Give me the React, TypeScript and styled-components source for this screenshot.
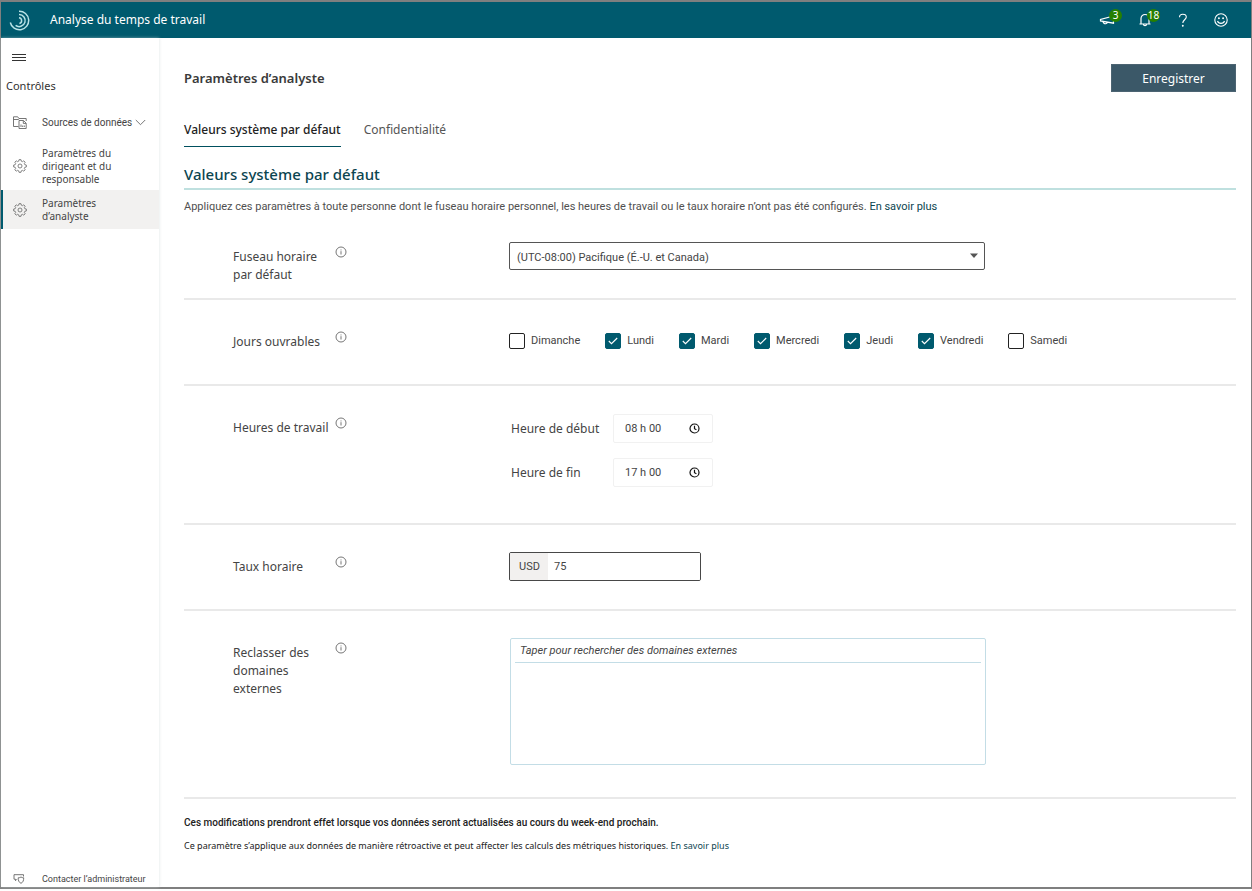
import React, { useState } from "react";
import styled, { createGlobalStyle, css } from "styled-components";

const display = `"Noto Sans", "Segoe UI", sans-serif`;
const body = `Roboto, "Segoe UI", sans-serif`;
const teal = "#005a6e";

const GlobalStyle = createGlobalStyle`
  *, *::before, *::after { box-sizing: border-box; }
  body { margin: 0; background: #fff; color: #444; font-family: ${body}; font-size: 11px; }
  button, input, select { font: inherit; color: inherit; }
  h1, h2, p, ul { margin: 0; padding: 0; }
  ul { list-style: none; }
`;

const Page = styled.div`
  min-height: 100vh;
  padding-bottom: 2px;
  display: flex;
`;

const Frame = styled.div`
  flex: 1;
  display: flex;
  flex-direction: column;
  border: solid #7f7f7f;
  border-width: 2px 1px;
`;

const Header = styled.header`
  height: 36px;
  display: flex;
  align-items: center;
  padding: 0 11px 0 8px;
  background: ${teal};
  color: #fff;
`;

const AppName = styled.span`
  flex: 1;
  margin-left: 20px;
  font: 400 12px/18px ${display};
`;

const HeaderButton = styled.button`
  position: relative;
  width: 38px;
  height: 34px;
  display: grid;
  place-items: center;
  padding: 0;
  border: 0;
  background: none;
`;

const Badge = styled.span`
  position: absolute;
  top: 6px;
  left: 21px;
  min-width: 13px;
  height: 13px;
  border-radius: 7px;
  background: #268000;
  font: 400 10px/13px ${display};
  text-align: center;
`;

const Columns = styled.div`
  flex: 1;
  display: flex;
`;

const Sidebar = styled.nav`
  position: relative;
  width: 158px;
  flex: none;
  display: flex;
  flex-direction: column;
  background: #fff;
  box-shadow: 0 0 3px rgba(200, 210, 210, 0.6);
`;

const MenuButton = styled.button`
  width: 36px;
  height: 38px;
  display: grid;
  place-items: center;
  padding: 0;
  border: 0;
  background: none;
`;

const SidebarTitle = styled.h2`
  padding-left: 5px;
  margin-bottom: 6px;
  font: 400 11px/20px ${display};
  color: #333;
`;

const NavList = styled.ul`
  flex: 1;
`;

const NavLink = styled.a<{ $size: "one" | "two" | "three" | "foot"; $active?: boolean }>`
  height: ${(p) => ({ one: 40, two: 39, three: 48, foot: 16 })[p.$size]}px;
  display: grid;
  grid-template-columns: 14px auto 1fr;
  align-items: center;
  padding-left: ${(p) => (p.$active ? 10 : 12)}px;
  color: #444;
  text-decoration: none;
  font: 400 ${(p) => (p.$size === "foot" ? 9 : 10)}px/13px ${body};
  font-family: ${(p) => (p.$size === "foot" || p.$size === "one" ? body : display)};
  ${(p) =>
    p.$active &&
    css`
      border-left: 2px solid ${teal};
      background: #f2f1f0;
    `}
`;

const NavText = styled.span`
  max-width: 94px;
  margin: 0 3px 0 15px;
`;

const FootText = styled.span`
  margin-left: 15px;
  white-space: nowrap;
`;

const Main = styled.main`
  flex: 1;
  min-width: 0;
  padding: 26px 15px 24px 25px;
`;

const TitleBar = styled.div`
  display: flex;
  align-items: center;
  justify-content: space-between;
`;

const PageTitle = styled.h1`
  font: 600 13px/20px ${display};
  color: #3a3a3a;
`;

const SaveButton = styled.button`
  width: 125px;
  height: 28px;
  padding: 2px 0 0;
  border: 1px solid #4c6472;
  background: #3b5868;
  color: #fff;
  font: 400 12px/18px ${display};
`;

const Tabs = styled.div`
  display: flex;
  gap: 23px;
  margin-top: 20px;
`;

const Tab = styled.button<{ $active?: boolean }>`
  height: 35px;
  padding: 2px 0 0;
  border: 0;
  border-bottom: 1px solid ${(p) => (p.$active ? "#00505f" : "transparent")};
  background: none;
  color: ${(p) => (p.$active ? "#222" : "#555")};
  font: ${(p) => (p.$active ? 500 : 400)} 12px/18px ${display};
`;

const SectionTitle = styled.h2`
  padding: 17px 0 4px;
  border-bottom: 2px solid #bfe0df;
  color: #0c4550;
  font: 500 15px/20px ${display};
`;

const Intro = styled.p`
  padding-top: 9px;
  line-height: 16px;
  color: #505050;
`;

const Link = styled.a`
  color: #0c4550;
  text-decoration: none;
`;

const Row = styled.section<{ $bottom?: number }>`
  display: grid;
  grid-template-columns: 102px 174px minmax(0, 1fr);
  align-items: start;
  padding: 27px 0 ${(p) => p.$bottom ?? 28}px 49px;
  border-bottom: 2px solid #e9e9e9;
`;

const RowLabel = styled.label`
  padding-top: 6px;
  white-space: pre-line;
  font: 400 12px/18px ${display};
`;

const LabelCell = styled.div`
  padding-top: 6px;
  font: 400 12px/18px ${display};
`;

const InfoButton = styled.button`
  justify-self: start;
  display: grid;
  margin-top: 4px;
  padding: 0;
  border: 0;
  background: none;
`;

const SelectBox = styled.div`
  display: grid;
  max-width: 476px;
  align-items: center;
  > * { grid-area: 1 / 1; }
  > svg { justify-self: end; margin-right: 6px; pointer-events: none; }
`;

const Select = styled.select`
  appearance: none;
  width: 100%;
  height: 28px;
  padding: 2px 24px 0 7px;
  border: 1px solid #555;
  border-radius: 2px;
  background: #fff;
`;

const Days = styled.div`
  display: flex;
  align-items: center;
  gap: 25px;
  height: 27px;
`;

const Day = styled.label`
  display: grid;
  grid-template-columns: 16px auto;
  column-gap: 6px;
  align-items: center;
  line-height: 16px;
  > svg { grid-area: 1 / 1; justify-self: center; pointer-events: none; }
`;

const Check = styled.input`
  grid-area: 1 / 1;
  appearance: none;
  width: 16px;
  height: 16px;
  margin: 0;
  border: 1px solid #222;
  border-radius: 2px;
  background: #fff;
  &:checked { border-color: ${teal}; background: ${teal}; }
`;

const Times = styled.div`
  display: grid;
  gap: 15px;
  padding: 1px 0 0 2px;
`;

const Time = styled.div`
  display: grid;
  grid-template-columns: 102px 100px;
  align-items: center;
  font: 400 12px/18px ${display};
`;

const TimeBox = styled.div`
  display: grid;
  align-items: center;
  > * { grid-area: 1 / 1; }
  > svg { justify-self: end; margin-right: 13px; }
`;

const TimeInput = styled.input`
  width: 100%;
  height: 29px;
  padding: 0 30px 0 11px;
  border: 1px solid #f1f1f1;
  border-radius: 2px;
  font: 400 11px/16px ${body};
`;

const Rate = styled.div`
  display: flex;
  max-width: 192px;
  height: 29px;
  border: 1px solid #484848;
  border-radius: 2px;
  overflow: hidden;
`;

const Currency = styled.span`
  width: 38px;
  padding-left: 9px;
  background: #f2f0ef;
  line-height: 27px;
`;

const RateInput = styled.input`
  flex: 1;
  min-width: 0;
  padding: 0 6px;
  border: 0;
  outline: 0;
`;

const Domains = styled.div`
  max-width: 476px;
  height: 127px;
  margin-left: 1px;
  padding: 0 4px;
  border: 1px solid #c3dde6;
  border-radius: 2px;
`;

const DomainInput = styled.input`
  width: 100%;
  height: 24px;
  padding: 0 5px;
  border: 0;
  border-bottom: 1px solid #c3dde6;
  outline: 0;
  &::placeholder { color: #444; opacity: 1; font-style: italic; }
`;

const Notes = styled.div`
  display: grid;
  gap: 7px;
  padding-top: 16px;
  color: #222;
  line-height: 16px;
`;

const StrongNote = styled.p`
  font: 500 10px/16px ${body};
`;

const SmallNote = styled.p`
  font: 400 9px/16px ${display};
`;

const Logo = () => (
  <svg width="21" height="21" viewBox="0 0 21 21" fill="none" stroke="#b9e2e6">
    <path d="M10 1.2A9.3 9.3 0 1 1 1.3 12.5" strokeWidth="1.5" />
    <path d="M10 4.6A6 6 0 1 1 6.6 15.4" strokeWidth="1.5" />
    <path d="M10 7.8A2.9 2.9 0 0 1 10.4 13.5" strokeWidth="1.5" />
  </svg>
);

const Megaphone = () => (
  <svg width="16" height="12" viewBox="0 0 16 12" fill="none" stroke="#fff" strokeWidth="1.2">
    <path d="M14.500 2 1.500 5.400v1.500l13 2.300zM4 7.500c.2 1.700 1.400 2.400 2.800 2.200 1-.2 1.500-.8 1.500-1.500" />
  </svg>
);

const Bell = () => (
  <svg width="14" height="14" viewBox="0 0 14 14" fill="none" stroke="#fff" strokeWidth="1.2">
    <path d="M1.500 11h11M3 11V5.500a4 4 0 0 1 8 0V11M5.500 11.200c0 2 3 2 3 0" />
  </svg>
);

const Question = () => (
  <svg width="10" height="15" viewBox="0 0 10 15" fill="none" stroke="#fff" strokeWidth="1.1">
    <path d="M1.500 4.200C1.500 2.200 3 1.200 4.800 1.200S8.300 2.200 8.300 4c0 2.600-3.500 3-3.500 6" />
    <circle cx="4.800" cy="12.800" r=".4" fill="#fff" />
  </svg>
);

const Smiley = () => (
  <svg width="14" height="14" viewBox="0 0 14 14" fill="none" stroke="#fff" strokeWidth="1.1">
    <circle cx="7" cy="7" r="6.2" />
    <path d="M3.500 8c1 3.200 6 3.200 7 0" />
    <circle cx="4.900" cy="5.200" r=".4" fill="#fff" />
    <circle cx="9.100" cy="5.200" r=".4" fill="#fff" />
  </svg>
);

const Burger = () => (
  <svg width="14" height="9" viewBox="0 0 14 9" stroke="#333">
    <path d="M0 1.500h14M0 4.500h14M0 7.500h14" />
  </svg>
);

const FolderChart = () => (
  <svg width="14" height="13" viewBox="0 0 14 13" fill="none" stroke="#666" strokeWidth=".9">
    <path d="M5.500 10.500h-5V.8h4.200l1.200 1.700h7.300V5M.5 3.500h5l1-1M6 4.500h4.500l2.700 2.700v5.300H6zM10.300 4.700v2.700h2.700M8 11V8.500M9.700 11V9.500M11.300 11V9.500" />
  </svg>
);

const teeth = Array.from({ length: 8 }, (_, i) => {
  const at = (r: number, deg: number) => {
    const a = ((i * 45 + deg - 90) * Math.PI) / 180;
    return `${(7 + r * Math.cos(a)).toFixed(2)} ${(7 + r * Math.sin(a)).toFixed(2)}`;
  };
  return `${at(6.4, -9)}L${at(6.4, 9)}L${at(5, 15)}L${at(5, 30)}`;
}).join("L");

const Gear = () => (
  <svg width="14" height="14" viewBox="0 0 14 14" fill="none" stroke="#666" strokeWidth=".8" strokeLinejoin="round">
    <path d={`M${teeth}Z`} />
    <circle cx="7" cy="7" r="2" />
  </svg>
);

const Chevron = () => (
  <svg width="11" height="7" viewBox="0 0 11 7" fill="none" stroke="#666" strokeWidth=".9">
    <path d="M.8 1l4.700 4.700L10.200 1" />
  </svg>
);

const Contact = () => (
  <svg width="12" height="10" viewBox="0 0 12 10" fill="none" stroke="#666" strokeWidth=".9">
    <path d="M10.500 2.500V.7H1v4.500h1.500v1.500L4 5.200M5.200 3.800c1.200 0 2-.3 2.800-.8.800.5 1.500.8 2.700.8 0 2.700-.6 4.500-2.700 5.500-2.200-1-2.800-2.800-2.800-5.500z" />
  </svg>
);

const Clock = () => (
  <svg width="11" height="11" viewBox="0 0 11 11" fill="none" stroke="#111" strokeWidth="1.2">
    <circle cx="5.500" cy="5.500" r="4.500" />
    <path d="M5.500 2.800v2.900l1.900 1.100" />
  </svg>
);

const Info = () => (
  <InfoButton type="button" aria-label="Informations">
    <svg width="12" height="12" viewBox="0 0 12 12" fill="none" stroke="#666" strokeWidth=".9">
      <circle cx="6" cy="6" r="5" />
      <path d="M6 5.200v3.300M6 3.500v.9" />
    </svg>
  </InfoButton>
);

const days: [string, boolean][] = [
  ["Dimanche", false],
  ["Lundi", true],
  ["Mardi", true],
  ["Mercredi", true],
  ["Jeudi", true],
  ["Vendredi", true],
  ["Samedi", false],
];

const DayCheck = ({ name, initial }: { name: string; initial: boolean }) => {
  const [on, setOn] = useState(initial);
  return (
    <Day>
      <Check type="checkbox" checked={on} onChange={(e) => setOn(e.target.checked)} />
      {on && (
        <svg width="10" height="8" viewBox="0 0 10 8" fill="none" stroke="#fff" strokeWidth="1.1">
          <path d="M.8 4l2.700 2.700L9.200 1" />
        </svg>
      )}
      {name}
    </Day>
  );
};

export default function App() {
  return (
    <Page>
      <GlobalStyle />
      <Frame>
        <Header>
          <Logo />
          <AppName>Analyse du temps de travail</AppName>
          <HeaderButton aria-label="Annonces"><Megaphone /><Badge>3</Badge></HeaderButton>
          <HeaderButton aria-label="Notifications"><Bell /><Badge>18</Badge></HeaderButton>
          <HeaderButton aria-label="Aide"><Question /></HeaderButton>
          <HeaderButton aria-label="Commentaires"><Smiley /></HeaderButton>
        </Header>
        <Columns>
          <Sidebar>
            <MenuButton aria-label="Menu"><Burger /></MenuButton>
            <SidebarTitle>Contrôles</SidebarTitle>
            <NavList>
              <li>
                <NavLink href="#sources" $size="one">
                  <FolderChart /><NavText>Sources de données</NavText><Chevron />
                </NavLink>
              </li>
              <li>
                <NavLink href="#dirigeant" $size="three">
                  <Gear /><NavText>Paramètres du dirigeant et du responsable</NavText>
                </NavLink>
              </li>
              <li>
                <NavLink href="#analyste" $size="two" $active>
                  <Gear /><NavText>Paramètres<br />d’analyste</NavText>
                </NavLink>
              </li>
            </NavList>
            <NavLink href="#contact" $size="foot">
              <Contact /><FootText>Contacter l’administrateur</FootText>
            </NavLink>
          </Sidebar>
          <Main>
            <TitleBar>
              <PageTitle>Paramètres d’analyste</PageTitle>
              <SaveButton>Enregistrer</SaveButton>
            </TitleBar>
            <Tabs role="tablist">
              <Tab role="tab" aria-selected $active>Valeurs système par défaut</Tab>
              <Tab role="tab">Confidentialité</Tab>
            </Tabs>
            <SectionTitle>Valeurs système par défaut</SectionTitle>
            <Intro>
              Appliquez ces paramètres à toute personne dont le fuseau horaire personnel, les heures de travail ou le
              taux horaire n’ont pas été configurés. <Link href="#savoir">En savoir plus</Link>
            </Intro>
            <Row $bottom={14}>
              <RowLabel htmlFor="fuseau">{"Fuseau horaire\npar défaut"}</RowLabel>
              <Info />
              <SelectBox>
                <Select id="fuseau">
                  <option>(UTC-08:00) Pacifique (É.-U. et Canada)</option>
                </Select>
                <svg width="10" height="6" viewBox="0 0 10 6"><path d="M1 .5h8L5 5z" fill="#555" /></svg>
              </SelectBox>
            </Row>
            <Row $bottom={30}>
              <LabelCell id="jours">Jours ouvrables</LabelCell>
              <Info />
              <Days role="group" aria-labelledby="jours">
                {days.map(([name, on]) => <DayCheck key={name} name={name} initial={on} />)}
              </Days>
            </Row>
            <Row $bottom={36}>
              <LabelCell id="heures">Heures de travail</LabelCell>
              <Info />
              <Times role="group" aria-labelledby="heures">
                <Time>
                  <label htmlFor="debut">Heure de début</label>
                  <TimeBox><TimeInput id="debut" defaultValue="08 h 00" /><Clock /></TimeBox>
                </Time>
                <Time>
                  <label htmlFor="fin">Heure de fin</label>
                  <TimeBox><TimeInput id="fin" defaultValue="17 h 00" /><Clock /></TimeBox>
                </Time>
              </Times>
            </Row>
            <Row>
              <RowLabel htmlFor="taux">Taux horaire</RowLabel>
              <Info />
              <Rate>
                <Currency>USD</Currency>
                <RateInput id="taux" defaultValue="75" />
              </Rate>
            </Row>
            <Row $bottom={32}>
              <RowLabel htmlFor="domaines">Reclasser des domaines externes</RowLabel>
              <Info />
              <Domains>
                <DomainInput id="domaines" placeholder="Taper pour rechercher des domaines externes" />
              </Domains>
            </Row>
            <Notes>
              <StrongNote>
                Ces modifications prendront effet lorsque vos données seront actualisées au cours du week-end prochain.
              </StrongNote>
              <SmallNote>
                Ce paramètre s’applique aux données de manière rétroactive et peut affecter les calculs des métriques
                historiques. <Link href="#historique">En savoir plus</Link>
              </SmallNote>
            </Notes>
          </Main>
        </Columns>
      </Frame>
    </Page>
  );
}
